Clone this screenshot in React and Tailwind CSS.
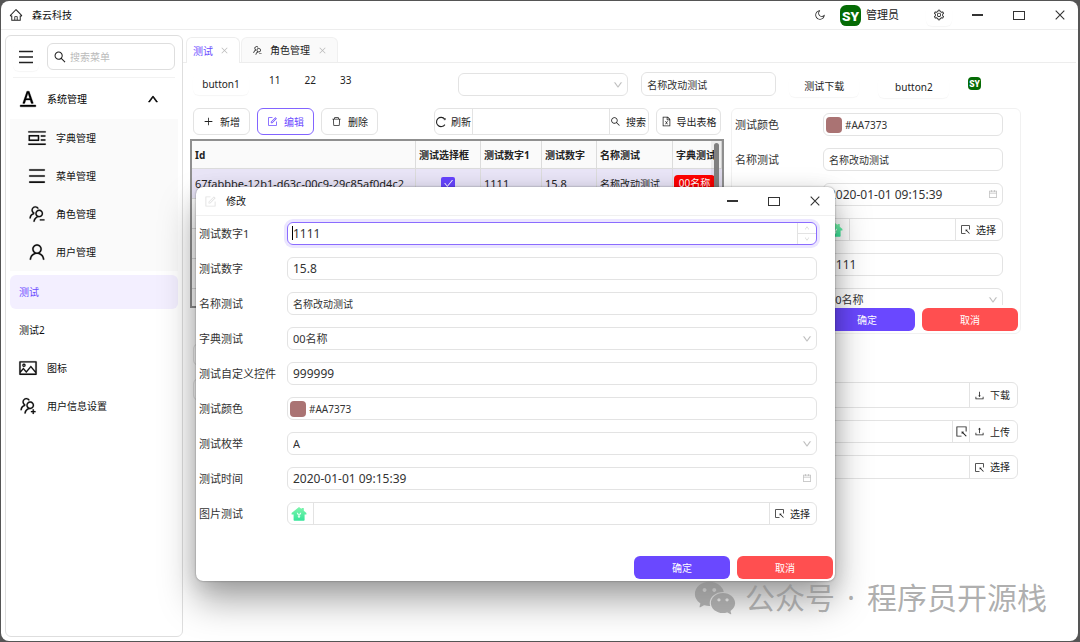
import React from "react";
import {
  AiOutlineHome,
  AiOutlineMoon,
  AiOutlineSetting,
  AiOutlineMenu,
  AiOutlineSearch,
  AiOutlineFontColors,
  AiOutlineUp,
  AiOutlineDown,
  AiOutlinePicLeft,
  AiOutlineUsergroupDelete,
  AiOutlineUsergroupAdd,
  AiOutlineUser,
  AiOutlinePicture,
  AiOutlineClose,
  AiOutlinePlus,
  AiOutlineForm,
  AiOutlineDelete,
  AiOutlineFileExcel,
  AiOutlineSelect,
  AiOutlineDownload,
  AiOutlineUpload,
  AiOutlineCalendar,
  AiOutlineCheck,
  AiFillWechat,
} from "react-icons/ai";

const box = "h-[23px] w-full rounded-[6px] border border-[#e3e3e3] bg-white px-[5px] text-[#333] outline-none";

function Logo({ className }) {
  return (
    <svg viewBox="0 0 40 40" className={className} role="img" aria-label="SY">
      <rect width="40" height="40" rx="12" fill="#056b05" />
      <text x="20" y="30" textAnchor="middle" fill="#fff" fontFamily="Roboto, sans-serif" fontWeight="900" fontSize="26">SY</text>
    </svg>
  );
}

function HouseLogo() {
  return (
    <svg viewBox="0 0 16 16" className="size-[16px]" aria-hidden="true">
      <defs>
        <linearGradient id="houseGreen" x1="0" y1="0" x2="0" y2="1">
          <stop offset="0" stopColor="#7ff5ac" />
          <stop offset="1" stopColor="#35e59a" />
        </linearGradient>
      </defs>
      <path d="M8 1 10.6 3V2h2.2v2.8L15.4 7v1.4h-1.8V14a.8.8 0 0 1-.8.8H3.4a.8.8 0 0 1-.8-.8V8.400H.6V7z" fill="url(#houseGreen)" />
      <path d="M8 12V8.500M6.300 6.800c0 1.200.8 1.700 1.700 1.700s1.700-.5 1.700-1.700M6.800 10.300h2.400" stroke="#e9fff3" strokeWidth="1.100" fill="none" />
    </svg>
  );
}

function ReloadIcon() {
  return (
    <svg viewBox="0 0 12 12" className="size-[12px]" fill="none" stroke="currentColor" strokeWidth="1.100" aria-hidden="true">
      <path d="M9.900 8.600A4.600 4.600 0 1 1 9.700 3.100" />
      <path d="M10.300 2.200v1.500H8.800" strokeWidth=".8" />
    </svg>
  );
}

function WindowControls({ className }) {
  return (
    <div className={"flex items-center text-[#333] " + className}>
      <button aria-label="最小化" className="grid h-5 w-[41px] place-items-center"><span className="h-[2px] w-[11px] bg-[#333]" /></button>
      <button aria-label="最大化" className="grid h-5 w-[41px] place-items-center"><span className="h-[9px] w-[12px] border border-[#333]" /></button>
      <button aria-label="关闭" className="grid h-5 w-[41px] place-items-center">
        <svg viewBox="0 0 10 10" className="size-[10px]" stroke="currentColor" strokeWidth="1.100"><path d="M.7.7 9.300 9.300M9.300.7.7 9.300" /></svg>
      </button>
    </div>
  );
}

function SelectBox({ id, value, label, size }) {
  return (
    <div className="relative w-full">
      <select id={id} aria-label={label} defaultValue={value} className={box + " appearance-none " + size}>
        <option>{value}</option>
      </select>
      <AiOutlineDown className="pointer-events-none absolute top-[7px] right-[5px] size-[10px] stroke-[30] text-[#b5b5b5]" />
    </div>
  );
}

function Field({ id, kind, value }) {
  if (kind === "select") return <SelectBox id={id} value={value} size="text-[11px]" />;
  if (kind === "enum") return <SelectBox id={id} value={value} size="text-[11px]" />;
  if (kind === "color")
    return (
      <div className="flex h-[23px] w-full items-center gap-[3px] rounded-[6px] border border-[#e3e3e3] bg-white pl-[2px]">
        <span className="size-[16px] shrink-0 rounded-[4px] bg-[#aa7373]" />
        <input id={id} defaultValue={value} className="w-full min-w-0 text-[10px] text-[#333] outline-none" />
      </div>
    );
  if (kind === "date")
    return (
      <div className="relative w-full">
        <input id={id} defaultValue={value} className={box + " text-[12px]"} />
        <AiOutlineCalendar className="absolute top-[6px] right-[5px] size-[10px] text-[#bbb]" />
      </div>
    );
  if (kind === "image")
    return (
      <div className="flex h-[23px] w-full overflow-hidden rounded-[6px] border border-[#e3e3e3] bg-white">
        <span className="grid w-[26px] shrink-0 place-items-center border-r border-[#e3e3e3] pr-1"><HouseLogo /></span>
        <input id={id} className="min-w-0 flex-1 outline-none" />
        <button className="flex w-[47px] shrink-0 items-center gap-[5px] border-l border-[#e3e3e3] pl-[4px]"><AiOutlineSelect className="size-[11px] shrink-0" />选择</button>
      </div>
    );
  if (kind === "spin")
    return (
      <div className="relative w-full rounded-[6px] ring-3 ring-[#ebe6ff]">
        <input id={id} defaultValue={value} className="h-[23px] w-full rounded-[6px] border border-[#8b6cff] bg-white px-[5px] text-[12px] text-[#333] outline-none" />
        <span className="absolute top-[4px] left-[5px] h-[14px] w-px bg-black" />
        <div className="absolute top-px right-px flex h-[21px] w-[19px] flex-col border-l border-[#e3e3e3] text-[#ccc]">
          <button aria-label="增加" className="grid flex-1 place-items-center border-b border-[#e3e3e3]"><AiOutlineUp className="size-[6px]" /></button>
          <button aria-label="减少" className="grid flex-1 place-items-center"><AiOutlineDown className="size-[6px]" /></button>
        </div>
      </div>
    );
  return <input id={id} defaultValue={value} className={box + (kind === "number" ? " text-[12px]" : " text-[10px]")} />;
}

function FormRow({ prefix, row, labelWidth }) {
  const id = prefix + row.label;
  return (
    <div className="flex items-center">
      <label htmlFor={id} className={"shrink-0 text-[#333] " + labelWidth}>{row.label}</label>
      <Field id={id} kind={row.kind} value={row.value} />
    </div>
  );
}

const dialogRows = [
  { label: "测试数字1", kind: "spin", value: "1111" },
  { label: "测试数字", kind: "number", value: "15.8" },
  { label: "名称测试", kind: "text", value: "名称改动测试" },
  { label: "字典测试", kind: "select", value: "00名称" },
  { label: "测试自定义控件", kind: "number", value: "999999" },
  { label: "测试颜色", kind: "color", value: "#AA7373" },
  { label: "测试枚举", kind: "enum", value: "A" },
  { label: "测试时间", kind: "date", value: "2020-01-01 09:15:39" },
  { label: "图片测试", kind: "image" },
];

const cardRows = [
  { label: "测试颜色", kind: "color", value: "#AA7373" },
  { label: "名称测试", kind: "text", value: "名称改动测试" },
  { label: "测试时间", kind: "date", value: "2020-01-01 09:15:39" },
  { label: "图片测试", kind: "image" },
  { label: "测试数字1", kind: "number", value: "1111" },
  { label: "字典测试", kind: "select", value: "00名称" },
];

const subItems = [
  { text: "字典管理", Icon: AiOutlinePicLeft },
  { text: "菜单管理", Icon: AiOutlineMenu },
  { text: "角色管理", Icon: AiOutlineUsergroupDelete },
  { text: "用户管理", Icon: AiOutlineUser },
];

function Sidebar() {
  return (
    <aside className="flex w-[178px] shrink-0 flex-col rounded-[6px] border border-[#dedede] bg-white px-1">
      <div className="mx-[3px] flex h-[42px] items-center justify-between border-b border-[#f2f2f2]">
        <button aria-label="菜单" className="grid h-[28px] w-[26px] place-items-center rounded-md shadow-[0_1px_1px_rgba(0,0,0,0.04)]"><AiOutlineMenu className="size-[18px]" /></button>
        <label className="flex h-[27px] w-[128px] items-center gap-[3px] rounded-[6px] border border-[#dedede] px-[5px]">
          <AiOutlineSearch className="size-[14px] shrink-0 text-[#222]" />
          <input aria-label="搜索菜单" placeholder="搜索菜单" className="w-full min-w-0 outline-none placeholder:text-[#bbb]" />
        </label>
      </div>
      <nav className="flex flex-col">
        <a href="#system" className="mt-px flex h-[40px] items-center gap-[9px] pr-[19px] pl-[8px] text-black">
          <AiOutlineFontColors className="size-[20px] stroke-[16]" />
          <span className="flex-1">系统管理</span>
          <AiOutlineUp className="size-[12px] stroke-[60]" />
        </a>
        <div className="flex flex-col bg-[#fafafa]">
          {subItems.map(({ text, Icon }) => (
            <a key={text} href={"#" + text} className="flex h-[38px] items-center gap-[9px] pl-[17px] text-[#111]">
              <Icon className="size-[20px] stroke-[8]" />
              {text}
            </a>
          ))}
        </div>
        <div className="mt-1 flex flex-col gap-1 text-[#111]">
          <a href="#test" className="flex h-[34px] items-center rounded-[6px] bg-[#f3efff] pl-[9px] text-[#6b4bff]">测试</a>
          <a href="#test2" className="flex h-[34px] items-center pl-[9px]">测试2</a>
          <a href="#icons" className="flex h-[34px] items-center gap-[9px] pl-[8px]"><AiOutlinePicture className="size-[20px] stroke-[8]" />图标</a>
          <a href="#profile" className="flex h-[34px] items-center gap-[9px] pl-[8px]"><AiOutlineUsergroupAdd className="size-[20px] stroke-[8]" />用户信息设置</a>
        </div>
      </nav>
    </aside>
  );
}

function DataTable() {
  const th = "border-r border-b border-[#dcdcdc] px-[3px] text-left font-bold whitespace-nowrap text-[#222]";
  const td = "border-r border-b border-[#dcdcdc] px-[3px] whitespace-nowrap";
  return (
    <div className="relative h-[169px] overflow-hidden border-2 border-[#8f8f8f] bg-white">
      <table className="w-full table-fixed border-separate border-spacing-0">
        <colgroup>
          <col className="w-[224px]" /><col className="w-[65px]" /><col className="w-[61px]" /><col className="w-[55px]" /><col className="w-[76px]" /><col />
        </colgroup>
        <thead>
          <tr className="h-[28px] bg-[#fafafa]">
            <th className={th}>Id</th><th className={th}>测试选择框</th><th className={th}>测试数字1</th><th className={th}>测试数字</th><th className={th}>名称测试</th><th className={th}>字典测试</th>
          </tr>
        </thead>
        <tbody>
          <tr className="h-[30px] bg-[#e9e5f7]">
            <td className={td + " text-[11px]"}>67fabbbe-12b1-d63c-00c9-29c85af0d4c2</td>
            <td className={td}>
              <span className="relative mx-auto grid size-[14px] place-items-center">
                <input type="checkbox" defaultChecked aria-label="测试选择框" className="col-start-1 row-start-1 size-[14px] appearance-none rounded-[2px] bg-[#6744ff]" />
                <AiOutlineCheck className="pointer-events-none col-start-1 row-start-1 size-[11px] text-white" />
              </span>
            </td>
            <td className={td + " text-[11px]"}>1111</td><td className={td + " text-[11px]"}>15.8</td><td className={td}>名称改动测试</td>
            <td className="border-b border-[#dcdcdc] px-px"><span className="block w-[41px] rounded-[4px] bg-[#ff0000] text-center leading-[17px] text-white">00名称</span></td>
          </tr>
          {[1, 2, 3, 4].map((n) => (
            <tr key={n} className="h-[30px]">
              <td className={td} /><td className={td} /><td className={td} /><td className={td} /><td className={td} /><td className={td} />
            </tr>
          ))}
        </tbody>
      </table>
      <div className="absolute top-0 right-0 h-full w-[11px] bg-black/5"><div className="mx-auto mt-[2px] h-[100px] w-[5px] rounded-full bg-[#808080]" /></div>
    </div>
  );
}

function ActionButtons({ className }) {
  return (
    <div className={"flex justify-end gap-[7px] text-white " + className}>
      <button className="h-[23px] w-[96px] rounded-[6px] bg-[#6a48ff]">确定</button>
      <button className="h-[23px] w-[96px] rounded-[6px] bg-[#ff4f50]">取消</button>
    </div>
  );
}

function Workspace() {
  const tool = "flex h-[27px] w-[57px] items-center justify-center gap-[6px] rounded-[6px] border border-[#e3e3e3]";
  const flat = "h-[22px] rounded-md shadow-[0_1px_1px_rgba(0,0,0,0.04)]";
  const strip = "flex overflow-hidden rounded-[6px] border border-[#e3e3e3] bg-white";
  const part = "flex shrink-0 items-center gap-[5px] border-l border-[#e3e3e3] pl-[4px]";
  return (
    <main className="min-w-0 flex-1">
      <div className="flex h-[26px] items-stretch border-b border-[#ededed] pl-[3px]">
        <div className="-mb-px flex w-[54px] items-center gap-[7px] rounded-t-[6px] border border-b-0 border-[#ededed] bg-white pl-[6px]">
          <a href="#test" className="text-[#6b4bff]">测试</a>
          <button aria-label="关闭测试"><AiOutlineClose className="size-[9px] text-[#bbb]" /></button>
        </div>
        <div className="ml-px flex w-[97px] items-center rounded-t-[6px] border border-b-0 border-[#f0f0f0] bg-[#fafafa] pl-[10px]">
          <AiOutlineUsergroupDelete className="size-[11px]" />
          <a href="#roles" className="mr-[8px] ml-[7px]">角色管理</a>
          <button aria-label="关闭角色管理"><AiOutlineClose className="size-[9px] text-[#bbb]" /></button>
        </div>
      </div>

      <div className="pl-[7px]">
        <div className="flex h-[45px] items-start pt-[8px] pl-[3px]">
          <button className={flat + " mt-[2px] w-[56px]"}>button1</button>
          <nav className="ml-[20px] flex gap-[24px] leading-[18px]"><a href="#11">11</a><a href="#22">22</a><a href="#33">33</a></nav>
          <div className="mt-[2px] ml-[107px] w-[170px]"><SelectBox label="选项" value="" size="text-[10px]" /></div>
          <input aria-label="名称" defaultValue="名称改动测试" className="mt-px ml-[13px] h-[24px] w-[135px] rounded-[6px] border border-[#e3e3e3] px-[5px] text-[#333] outline-none" />
          <button className={flat + " mt-[4px] ml-[13px] w-[70px]"}>测试下载</button>
          <button className={flat + " mt-[5px] ml-[19px] w-[71px]"}>button2</button>
          <Logo className="mt-[6px] ml-[19px] size-[13px]" />
        </div>

        <div className="flex items-start gap-[7px]">
          <div className="w-[534px] shrink-0">
            <div className="flex h-[31px] items-start gap-[7px] pl-[3px]">
              <button className={tool}><AiOutlinePlus className="size-[11px]" />新增</button>
              <button className="flex h-[27px] w-[57px] items-center justify-center gap-[6px] rounded-[6px] border border-[#8264ff] text-[#6b4bff]"><AiOutlineForm className="size-[11px]" />编辑</button>
              <button className={tool}><AiOutlineDelete className="size-[11px]" />删除</button>
              <div className={strip + " ml-auto h-[27px] w-[215px]"}>
                <button className="flex w-[38px] shrink-0 items-center gap-[4px] border-r border-[#e3e3e3]"><ReloadIcon />刷新</button>
                <input aria-label="搜索内容" className="min-w-0 flex-1 outline-none" />
                <button className="flex w-[39px] shrink-0 items-center gap-[5px] border-l border-[#e3e3e3]"><AiOutlineSearch className="size-[11px]" />搜索</button>
              </div>
              <button className="mr-[3px] flex h-[27px] w-[65px] items-center justify-center gap-[5px] rounded-[6px] border border-[#e3e3e3] whitespace-nowrap"><AiOutlineFileExcel className="size-[11px]" />导出表格</button>
            </div>
            <DataTable />
            <div className="mt-[35px] flex flex-col items-start gap-[12px] pl-[3px]">
              <button className="h-[23px] w-[90px] rounded-[6px] border border-[#e3e3e3] bg-white">测试</button>
              <button className="h-[23px] w-[90px] rounded-[6px] border border-[#e3e3e3] bg-white">测试2</button>
            </div>
          </div>

          <div className="w-[290px] shrink-0">
            <div className="rounded-[6px] border border-[#f1f1f1] pb-[2px]">
              <div className="flex h-[196px] flex-col gap-[12px] overflow-hidden pt-[4px] pr-[17px] pl-[3px]">
                {cardRows.map((row) => <FormRow key={row.label} prefix="card-" row={row} labelWidth="w-[88px] text-[11px]" />)}
              </div>
              <ActionButtons className="mt-[3px] pr-[2px]" />
            </div>
            <div className="mt-[48px] mr-[3px] flex flex-col gap-[12px]">
              <div className={strip + " h-[26px]"}>
                <input aria-label="下载路径" className="min-w-0 flex-1 outline-none" />
                <button className={part + " w-[48px]"}><AiOutlineDownload className="size-[11px]" />下载</button>
              </div>
              <div className={strip + " h-[23px]"}>
                <input aria-label="上传路径" className="min-w-0 flex-1 outline-none" />
                <button aria-label="选择文件" className="grid w-[17px] shrink-0 place-items-center border-l border-[#e3e3e3]"><AiOutlineSelect className="size-[13px]" /></button>
                <button className={part + " w-[48px]"}><AiOutlineUpload className="size-[11px]" />上传</button>
              </div>
              <div className={strip + " h-[24px]"}>
                <input aria-label="选择路径" className="min-w-0 flex-1 outline-none" />
                <button className={part + " w-[48px]"}><AiOutlineSelect className="size-[11px]" />选择</button>
              </div>
            </div>
          </div>
        </div>
      </div>
    </main>
  );
}

function EditDialog() {
  return (
    <section role="dialog" aria-label="修改" className="absolute top-[187px] left-[196px] w-[639px] rounded-[7px] bg-white shadow-[0_0_2px_rgba(0,0,0,0.45),0_4px_20px_rgba(0,0,0,0.12),0_20px_36px_rgba(0,0,0,0.34)]">
      <header className="flex h-[29px] items-center border-b border-[#f0f0f0] pl-[8px]">
        <AiOutlineForm className="size-[13px] text-[#e2e2e2]" />
        <h2 className="ml-[9px] flex-1 text-[#111]">修改</h2>
        <WindowControls className="" />
      </header>
      <form className="flex flex-col gap-[12px] pt-[6px] pr-[18px] pl-[3px]" onSubmit={(e) => e.preventDefault()}>
        {dialogRows.map((row) => <FormRow key={row.label} prefix="dialog-" row={row} labelWidth="w-[88px] text-[11px]" />)}
      </form>
      <ActionButtons className="pt-[31px] pr-[2px] pb-[2px]" />
    </section>
  );
}

export default function App() {
  return (
    <div className="relative flex min-h-screen flex-col bg-[#555] p-px pr-[2px] font-['Noto_Sans','Noto_Sans_CJK_SC',sans-serif] text-[10px] leading-[16px] text-[#222]">
      <div className="flex flex-1 flex-col overflow-hidden rounded-[8px] bg-white">
        <header className="flex h-[29px] shrink-0 items-center border-b border-[#ededed] pl-[8px]">
          <AiOutlineHome className="size-[14px]" />
          <h1 className="ml-[9px] flex-1 text-[#111]">森云科技</h1>
          <button aria-label="深色模式"><AiOutlineMoon className="size-[12px]" /></button>
          <Logo className="ml-[14px] size-[21px]" />
          <span className="ml-[5px] text-[11px]">管理员</span>
          <button aria-label="设置" className="mr-[5px] ml-[27px] grid h-[22px] w-[26px] place-items-center rounded-md shadow-[0_1px_1px_rgba(0,0,0,0.04)]"><AiOutlineSetting className="size-[12px]" /></button>
          <WindowControls className="-mr-[2px]" />
        </header>
        <div className="flex flex-1 pr-[2px] pb-[4px] pl-[4px]">
          <div className="flex pt-[5px]"><Sidebar /></div>
          <div className="flex min-w-0 flex-1 pt-[7px]"><Workspace /></div>
        </div>
      </div>
      <EditDialog />
      <div className="absolute right-[33px] bottom-[21px] flex items-center text-[30px] leading-[44px] text-[#8c8c8c]/70">
        <AiFillWechat className="mr-[7px] size-[46px]" />
        <span>公众号</span>
        <span className="w-[32px] text-center">·</span>
        <span>程序员开源栈</span>
      </div>
    </div>
  );
}
